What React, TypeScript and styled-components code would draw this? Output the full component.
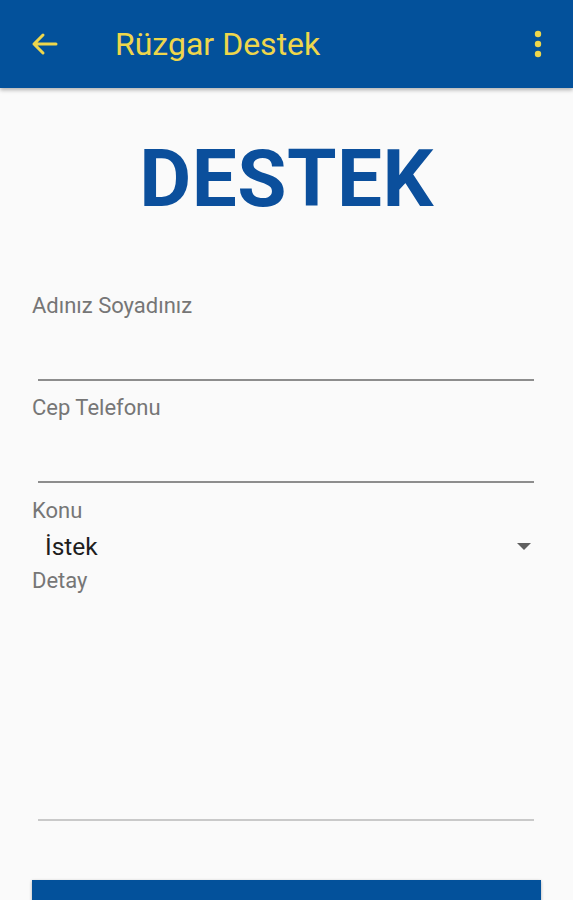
import React from "react";
import styled, { createGlobalStyle } from "styled-components";

const GlobalStyle = createGlobalStyle`
  html, body {
    margin: 0;
    padding: 0;
    background: #fafafa;
    font-family: Roboto, "Liberation Sans", Arial, sans-serif;
  }
`;

const Screen = styled.div`
  width: 573px;
  height: 900px;
  overflow: hidden;
  background: #fafafa;
`;

const AppBar = styled.header`
  height: 88px;
  background: #03519b;
  display: flex;
  align-items: center;
  padding: 0 31px 0 30px;
  box-shadow: 0 2px 4px rgba(0, 0, 0, 0.3);
  box-sizing: border-box;
`;

const Title = styled.h1`
  margin: 0 0 0 57px;
  flex: 1;
  font-size: 32px;
  font-weight: 400;
  color: #eed64c;
`;

const IconButton = styled.div`
  display: flex;
  align-items: center;
  justify-content: center;
`;

const Heading = styled.div`
  text-align: center;
  font-size: 80px;
  font-weight: 700;
  color: #0b4f9c;
  line-height: 80px;
  margin-top: 51px;
  letter-spacing: 0.5px;
`;

const Form = styled.form`
  padding: 0 32px;
  margin-top: 74px;
`;

const Label = styled.div`
  font-size: 22px;
  color: #767676;
  line-height: 26px;
`;

const Underline = styled.div<{ $light?: boolean }>`
  margin: 0 7px 0 6px;
  height: 2px;
  background: ${p => (p.$light ? "#c9c9c9" : "#8d8d8d")};
`;

const Field = styled.div<{ $gap: number }>`
  display: flex;
  flex-direction: column;
  & > ${Underline} {
    margin-top: ${p => p.$gap}px;
  }
`;

const Spacer = styled.div<{ $h: number }>`
  height: ${p => p.$h}px;
`;

const SelectRow = styled.div`
  display: flex;
  align-items: center;
  justify-content: space-between;
  padding: 0 10px 0 13px;
  height: 44px;
`;

const SelectValue = styled.span`
  font-size: 24.5px;
  color: #1e1e1e;
`;

const Caret = styled.span`
  width: 0;
  height: 0;
  border-left: 7px solid transparent;
  border-right: 7px solid transparent;
  border-top: 7px solid #5f5f5f;
`;

const SubmitButton = styled.button`
  display: block;
  width: 100%;
  height: 60px;
  margin-top: 59px;
  border: none;
  background: #03519b;
  box-shadow: 0 1px 3px rgba(0, 0, 0, 0.3);
`;

export default function App() {
  return (
    <Screen>
      <GlobalStyle />
      <AppBar>
        <IconButton>
          <svg width="28" height="24" viewBox="0 0 28 24">
            <path d="M26 12H4M13 3L4 12l9 9" fill="none" stroke="#eed64c" strokeWidth="3" strokeLinecap="round" strokeLinejoin="round" />
          </svg>
        </IconButton>
        <Title>Rüzgar Destek</Title>
        <IconButton>
          <svg width="8" height="28" viewBox="0 0 8 28">
            <circle cx="4" cy="4" r="3.2" fill="#eed64c" />
            <circle cx="4" cy="14" r="3.2" fill="#eed64c" />
            <circle cx="4" cy="24" r="3.2" fill="#eed64c" />
          </svg>
        </IconButton>
      </AppBar>
      <Heading>DESTEK</Heading>
      <Form>
        <Field $gap={60}>
          <Label>Adınız Soyadınız</Label>
          <Underline />
        </Field>
        <Spacer $h={14} />
        <Field $gap={60}>
          <Label>Cep Telefonu</Label>
          <Underline />
        </Field>
        <Spacer $h={15} />
        <Label>Konu</Label>
        <SelectRow>
          <SelectValue>İstek</SelectValue>
          <Caret />
        </SelectRow>
        <Field $gap={225}>
          <Label>Detay</Label>
          <Underline $light />
        </Field>
        <SubmitButton type="button" />
      </Form>
    </Screen>
  );
}
